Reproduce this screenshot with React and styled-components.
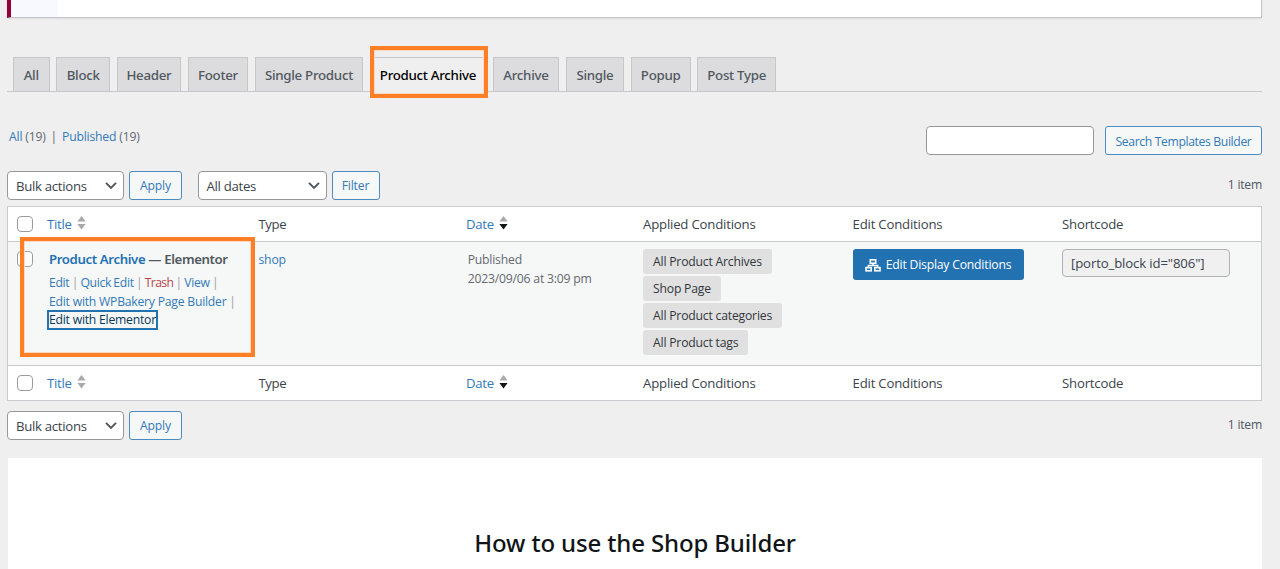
import React from 'react';
import styled, { createGlobalStyle, css } from 'styled-components';

const GlobalStyle = createGlobalStyle`
  *, *::before, *::after { box-sizing: border-box; }
  body {
    margin: 0;
    background: #efeff0;
    color: #50575e;
    font: 12.2px/18.7px "Open Sans", "Noto Sans", sans-serif;
    letter-spacing: -0.2px;
    overflow: hidden;
  }
  button, input { font: inherit; letter-spacing: inherit; margin: 0; }
`;

const Page = styled.main`
  height: 569px;
  padding: 0 18px 0 7px;
  display: flex;
  flex-direction: column;
  overflow: hidden;
  white-space: nowrap;
`;

const Notice = styled.div`
  flex: none;
  height: 18px;
  display: flex;
  background: #fff;
  border: 1px solid #c3c4c7;
  border-top: 0;
  border-left: 4px solid #93003c;
  box-shadow: 0 1px 2px rgba(0, 0, 0, 0.08);
`;

const NoticeAside = styled.div`
  width: 47px;
  background: #f8f9ff;
`;

const Tabs = styled.nav`
  flex: none;
  height: 35px;
  margin-top: 39px;
  padding-left: 5.7px;
  display: flex;
  gap: 6.5px;
  border-bottom: 1px solid #c6c7ca;
`;

const Tab = styled.a`
  position: relative;
  width: ${(p) => p.$width}px;
  height: ${(p) => (p.$active ? 35 : 34)}px;
  border: 1px solid #c6c7ca;
  border-bottom: 0;
  background: ${(p) => (p.$active ? '#efeff0' : '#dcdcde')};
  color: ${(p) => (p.$active ? '#000' : '#50575e')};
  font: 550 13.3px/35px "Noto Sans", sans-serif;
  letter-spacing: -0.28px;
  text-align: center;
`;

const highlight = css`
  position: absolute;
  z-index: 2;
  border: 4px solid #ff7f27;
  box-shadow: inset 0 0 0 1px #fbd9c2;
  pointer-events: none;
`;

const TabHighlight = styled.span`
  ${highlight}
  inset: -12px -3px -6px -1px;
`;

const RowHighlight = styled.span`
  ${highlight}
  top: 30px;
  left: 12px;
  width: 235px;
  height: 120px;
`;

const FilterBar = styled.div`
  flex: none;
  height: 29px;
  margin-top: 34px;
  display: flex;
  justify-content: space-between;
`;

const StatusLinks = styled.div`
  display: flex;
  gap: 5px;
  padding: 2px 0 0 2px;
  color: #646970;
`;

const Link = styled.a`
  color: ${(p) => (p.$danger ? '#b9444b' : '#337ab7')};
  letter-spacing: ${(p) => (p.$danger ? '-0.65px' : 'inherit')};
`;

const SearchBox = styled.div`
  display: flex;
  gap: 11px;
`;

const TextField = styled.input`
  width: 168px;
  height: ${(p) => (p.readOnly ? 28 : 29)}px;
  padding: 0 8px;
  border: 1px solid ${(p) => (p.readOnly ? '#b0b2b6' : '#96989c')};
  border-radius: 4px;
  background: ${(p) => (p.readOnly ? '#f0f0f1' : '#fff')};
  color: #3c434a;
  font-size: 13.2px;
  letter-spacing: -0.14px;
`;

const Button = styled.button`
  width: ${(p) => p.$width}px;
  height: 29px;
  padding: ${(p) => p.$drop || 1}px 0 0;
  border: 1px solid #4a8cc2;
  border-radius: 3px;
  background: #f6f7f7;
  color: #337ab7;
  letter-spacing: ${(p) => p.$tracking || -0.2}px;
`;

const PrimaryButton = styled.button`
  width: 171px;
  height: 31px;
  display: flex;
  align-items: center;
  justify-content: center;
  gap: 5px;
  padding: 1px 0 0;
  border: 0;
  border-radius: 3px;
  background: #2271b1;
  color: #fff;
`;

const Toolbar = styled.div`
  flex: none;
  height: 29px;
  margin-top: ${(p) => p.$top}px;
  display: flex;
  align-items: center;
`;

const Group = styled.div`
  display: flex;
  gap: 5px;
  margin-right: 15.5px;
`;

const Select = styled.div`
  width: ${(p) => p.$width}px;
  height: 29px;
  padding: 1px 6px 0 8px;
  display: flex;
  align-items: center;
  justify-content: space-between;
  border: 1px solid #96989c;
  border-radius: 4px;
  background: #fff;
  color: #3c434a;
  font-size: 13.2px;
  letter-spacing: -0.3px;
`;

const ItemCount = styled.span`
  margin-left: auto;
  letter-spacing: -0.25px;
`;

const Table = styled.section`
  flex: none;
  position: relative;
  height: 195px;
  margin-top: 6px;
  display: flex;
  flex-direction: column;
  border: 1px solid #c9cbce;
  background: #fff;
`;

const Row = styled.div`
  display: grid;
  grid-template-columns: 39px 211.5px 207.5px 177px 209.5px 209.5px 1fr;
`;

const HeadRow = styled(Row)`
  height: 34px;
  align-items: center;
  color: #3c434a;
  font-size: 13.2px;
`;

const BodyRow = styled(Row)`
  height: 125px;
  padding-top: 7px;
  border: solid #c9cbce;
  border-width: 1px 0;
  background: #f6f7f7;
`;

const Checkbox = styled.span`
  width: 16px;
  height: 16px;
  margin: ${(p) => (p.$inRow ? 2 : 0)}px 0 0 9px;
  border: 1px solid #9a9ca0;
  border-radius: 4px;
  background: #fff;
`;

const SortLink = styled.a`
  display: flex;
  align-items: center;
  gap: 5px;
  color: #337ab7;
`;

const HeadText = styled.span`
  padding-top: 1px;
  letter-spacing: ${(p) => p.$tracking || -0.2}px;
`;

const TitleCell = styled.div`
  padding: 0.5px 0 0 2px;
`;

const RowTitle = styled.div`
  margin-bottom: 5.5px;
  font: 600 13.2px/19px "Noto Sans", sans-serif;
  letter-spacing: -0.37px;
  color: #50575e;
`;

const TitleLink = styled.a`
  color: #2271b1;
`;

const RowActions = styled.div`
  color: #a0a0a4;
  letter-spacing: ${(p) => p.$tracking || -0.23}px;
  word-spacing: ${(p) => p.$spacing || 0}px;
`;

const FocusedLink = styled.a`
  display: inline-block;
  height: 16px;
  line-height: 16px;
  color: #043959;
  outline: 2px solid #2271b1;
`;

const DateCell = styled.div`
  padding: 2px 0 0 1.7px;
  color: #646970;
`;

const TypeCell = styled.div`
  padding-top: 2px;
`;

const Badges = styled.div`
  display: flex;
  flex-direction: column;
  align-items: flex-start;
  gap: 2.6px;
`;

const Badge = styled.span`
  height: 24.5px;
  padding: 0 10px;
  border-radius: 3px;
  background: #e0e0e0;
  color: #32373c;
  line-height: 25px;
`;

const GuidePanel = styled.section`
  flex: none;
  height: 130px;
  margin: 18px 0 0 1px;
  padding-top: 69px;
  background: #fff;
`;

const GuideTitle = styled.h2`
  margin: 0;
  color: #101517;
  font: 500 24px/32px "Noto Sans", sans-serif;
  letter-spacing: -0.14px;
  text-align: center;
`;

const Chevron = () => (
  <svg width="12" height="8" viewBox="0 0 12 8" fill="none" stroke="#50575e" strokeWidth="2">
    <path d="M1 .9 6 5.9l5-5" />
  </svg>
);

const SortArrows = ({ descending }) => (
  <svg width="9" height="15" viewBox="0 0 9 15">
    <path d="M4.5 0 8.6 5.6H.4z" fill="#a7aaad" />
    <path d="M.4 8h8.2L4.5 13.6z" fill={descending ? '#101517' : '#a7aaad'} />
  </svg>
);

const Sitemap = () => (
  <svg width="16" height="13" viewBox="0 0 16 13" fill="none" stroke="#fff" strokeWidth="1.6">
    <rect x="5.3" y="0.8" width="5.4" height="3.4" />
    <rect x="1" y="8.6" width="5.2" height="3.2" />
    <rect x="9.8" y="8.6" width="5.2" height="3.2" />
    <path d="M8 4v2.4M3.4 8.4V6.5h9.2v1.9" strokeWidth="1.5" />
  </svg>
);

const tabs = [
  ['All', 37], ['Block', 54], ['Header', 64.5], ['Footer', 60.5], ['Single Product', 108.5],
  ['Product Archive', 116.5], ['Archive', 66.5], ['Single', 58.5], ['Popup', 60], ['Post Type', 79],
];

const conditions = ['All Product Archives', 'Shop Page', 'All Product categories', 'All Product tags'];

const Headings = () => (
  <HeadRow>
    <Checkbox />
    <SortLink><HeadText $tracking={-0.25}>Title</HeadText><SortArrows /></SortLink>
    <HeadText $tracking={-0.4}>Type</HeadText>
    <SortLink><HeadText $tracking={-0.3}>Date</HeadText><SortArrows descending /></SortLink>
    <HeadText>Applied Conditions</HeadText>
    <HeadText>Edit Conditions</HeadText>
    <HeadText>Shortcode</HeadText>
  </HeadRow>
);

const BulkActions = () => (
  <Group>
    <Select $width={117}>Bulk actions<Chevron /></Select>
    <Button $width={53}>Apply</Button>
  </Group>
);

export default function App() {
  return (
    <Page>
      <GlobalStyle />
      <Notice><NoticeAside /></Notice>
      <Tabs>
        {tabs.map(([label, width]) => (
          <Tab key={label} $width={width} $active={label === 'Product Archive'}>
            {label}
            {label === 'Product Archive' && <TabHighlight />}
          </Tab>
        ))}
      </Tabs>
      <FilterBar>
        <StatusLinks>
          <span><Link>All</Link> (19)</span>
          <span>|</span>
          <span><Link>Published</Link> (19)</span>
        </StatusLinks>
        <SearchBox>
          <TextField />
          <Button $width={157} $tracking={-0.37} $drop={3}>Search Templates Builder</Button>
        </SearchBox>
      </FilterBar>
      <Toolbar $top={16}>
        <BulkActions />
        <Group>
          <Select $width={129}>All dates<Chevron /></Select>
          <Button $width={48}>Filter</Button>
        </Group>
        <ItemCount>1 item</ItemCount>
      </Toolbar>
      <Table>
        <Headings />
        <BodyRow>
          <Checkbox $inRow />
          <TitleCell>
            <RowTitle><TitleLink>Product Archive</TitleLink> — Elementor</RowTitle>
            <RowActions $tracking={-0.33} $spacing={-0.5}>
              <Link>Edit</Link> | <Link>Quick Edit</Link> | <Link $danger>Trash</Link> | <Link>View</Link> |
            </RowActions>
            <RowActions><Link>Edit with WPBakery Page Builder</Link> |</RowActions>
            <RowActions><FocusedLink>Edit with Elementor</FocusedLink></RowActions>
          </TitleCell>
          <TypeCell><Link>shop</Link></TypeCell>
          <DateCell>
            <div>Published</div>
            <div>2023/09/06 at 3:09 pm</div>
          </DateCell>
          <Badges>
            {conditions.map((name) => <Badge key={name}>{name}</Badge>)}
          </Badges>
          <div><PrimaryButton><Sitemap />Edit Display Conditions</PrimaryButton></div>
          <div><TextField readOnly value='[porto_block id="806"]' /></div>
        </BodyRow>
        <Headings />
        <RowHighlight />
      </Table>
      <Toolbar $top={10}>
        <BulkActions />
        <ItemCount>1 item</ItemCount>
      </Toolbar>
      <GuidePanel>
        <GuideTitle>How to use the Shop Builder</GuideTitle>
      </GuidePanel>
    </Page>
  );
}
